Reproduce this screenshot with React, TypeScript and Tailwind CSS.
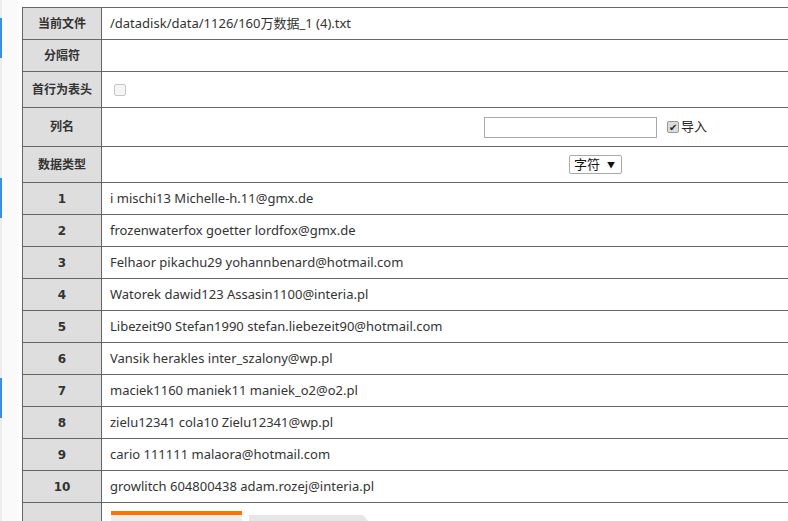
import React from 'react'

const ROWS = [
  'i mischi13 Michelle-h.11@gmx.de',
  'frozenwaterfox goetter lordfox@gmx.de',
  'Felhaor pikachu29 yohannbenard@hotmail.com',
  'Watorek dawid123 Assasin1100@interia.pl',
  'Libezeit90 Stefan1990 stefan.liebezeit90@hotmail.com',
  'Vansik herakles inter_szalony@wp.pl',
  'maciek1160 maniek11 maniek_o2@o2.pl',
  'zielu12341 cola10 Zielu12341@wp.pl',
  'cario 111111 malaora@hotmail.com',
  'growlitch 604800438 adam.rozej@interia.pl',
]

const FONT = "font-['Noto_Sans','Noto_Sans_CJK_SC',sans-serif]"
const th = 'w-[79px] border border-[#666] bg-[#dedede] text-center font-bold text-[12px] text-[#333]'
const td = 'border border-[#666] px-2 text-[13px] text-[#333]'

export default function App() {
  return (
    <div className={`relative h-[521px] w-[788px] overflow-hidden bg-white ${FONT}`}>
      {/* left sidebar edge */}
      <div className="absolute left-0 top-0 flex h-full w-[18px] flex-col border-l-2 border-[#ececec] bg-[#fafafa]">
        <div className="absolute -left-[2px] top-[18px] h-[40px] w-[2px] bg-[#3a8ee6]" />
        <div className="absolute -left-[2px] top-[178px] h-[40px] w-[2px] bg-[#3a8ee6]" />
        <div className="absolute -left-[2px] top-[378px] h-[40px] w-[2px] bg-[#3a8ee6]" />
      </div>

      <div className="pl-[22px] pt-[7px]">
        <table className="w-[1068px] border-collapse">
          <tbody>
            <tr className="h-[32px]">
              <th className={th}>当前文件</th>
              <td className={td}>/datadisk/data/1126/160万数据_1 (4).txt</td>
            </tr>
            <tr className="h-[32px]">
              <th className={th}>分隔符</th>
              <td className={td}></td>
            </tr>
            <tr className="h-[36px]">
              <th className={th}>首行为表头</th>
              <td className={td}>
                <div className="ml-[4px] h-[12px] w-[12px] rounded-[2px] border border-[#c8c8c8] bg-[#f4f4f4]" />
              </td>
            </tr>
            <tr className="h-[39px]">
              <th className={th}>列名</th>
              <td className={td}>
                <div className="flex items-center justify-center gap-[2px]">
                  <input
                    type="text"
                    readOnly
                    className="h-[21px] w-[173px] border border-[#a9a9a9] bg-white outline-none"
                  />
                  <span className="ml-[8px] flex h-[12px] w-[12px] items-center justify-center rounded-[2px] border border-[#999] bg-[#dcdcdc] text-[10px] leading-none text-[#222]">
                    ✔
                  </span>
                  <span className="text-[13px] text-[#222]">导入</span>
                </div>
              </td>
            </tr>
            <tr className="h-[36px]">
              <th className={th}>数据类型</th>
              <td className={td}>
                <div className="flex justify-center">
                  <div className="flex h-[19px] w-[53px] items-center justify-between rounded-[2px] border border-[#a9a9a9] bg-white pl-[4px] pr-[6px] text-[13px] text-[#111]">
                    <span>字符</span>
                    <span className="text-[8px]">▼</span>
                  </div>
                </div>
              </td>
            </tr>
            {ROWS.map((row, i) => (
              <tr key={i} className="h-[32px]">
                <th className={`${th} font-['DejaVu_Sans',sans-serif] text-[12px]`}>{i + 1}</th>
                <td className={td}>{row}</td>
              </tr>
            ))}
            <tr className="h-[40px]">
              <th className={`${th} align-top`}></th>
              <td className={`${td} align-top`}>
                <div className="mt-[8px] flex items-start gap-[7px] pl-[1px]">
                  <div className="h-[12px] w-[131px] border-t-4 border-[#ff7200] bg-[#efefef]" />
                  <div className="mt-[4px] h-[12px] w-[124px] bg-[#e6e6e6] [clip-path:polygon(0_0,92%_0,100%_100%,0_100%)]" />
                </div>
              </td>
            </tr>
          </tbody>
        </table>
      </div>
    </div>
  )
}
